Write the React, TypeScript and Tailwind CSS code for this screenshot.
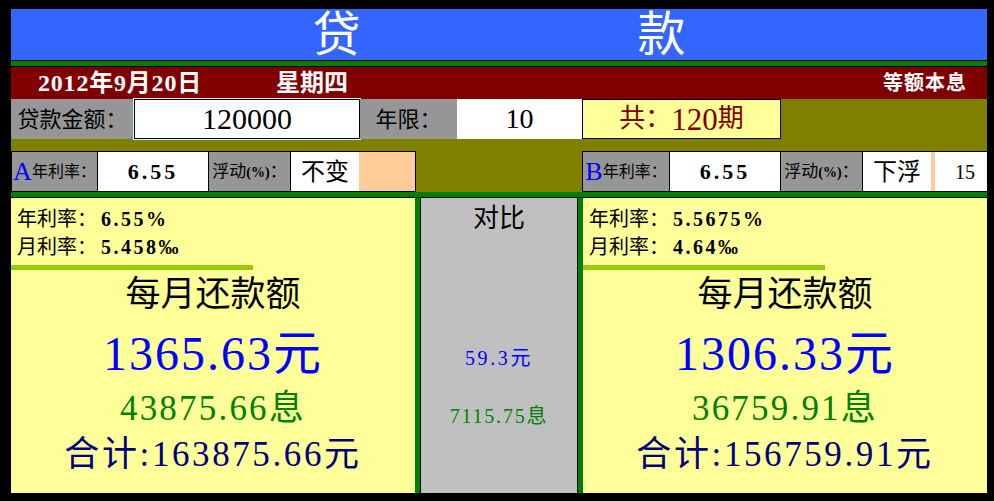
import React from "react";

const font = "font-['Liberation_Serif','Noto_Sans_CJK_SC',serif]";

function RateCell({ letter }: { letter: string }) {
  return (
    <div className="flex items-center justify-center whitespace-nowrap">
      <span className="text-[26px] leading-none text-[#0000ff]">{letter}</span>
      <span className="text-[16px] leading-none text-black">年利率：</span>
    </div>
  );
}

function FloatLabel() {
  return (
    <span className="text-[17px] leading-none text-black whitespace-nowrap">
      浮动<span className="font-bold text-[14px]">(%)</span>：
    </span>
  );
}

function Panel({
  yearRate,
  monthRate,
  pay,
  interest,
  total,
}: {
  yearRate: string;
  monthRate: string;
  pay: string;
  interest: string;
  total: string;
}) {
  return (
    <div className="w-[404px] h-full bg-[#ffff99] flex flex-col">
      <div className="pl-[6px] pt-[7px] text-[20px] leading-[28px] text-black">
        <div>
          年利率：<span className="ml-[4px] font-bold tracking-[2.5px]">{yearRate}%</span>
        </div>
        <div>
          月利率：<span className="ml-[4px] font-bold tracking-[2.5px]">{monthRate}‰</span>
        </div>
      </div>
      <div className="mt-[4px] h-[5px] w-[242px] bg-[#99cc00]" />
      <div className="mt-[5px] text-center text-[35px] leading-[40px] text-black">每月还款额</div>
      <div className="mt-[14px] text-center text-[48px] leading-[50px] tracking-[2px] text-[#0000ff]">
        {pay}元
      </div>
      <div className="mt-[10px] text-center text-[35px] leading-[40px] tracking-[2.2px] text-[#008000]">
        {interest}息
      </div>
      <div className="mt-[6px] text-center text-[35px] leading-[40px] tracking-[2.6px] text-[#000080]">
        合计:{total}元
      </div>
    </div>
  );
}

export default function App() {
  return (
    <div className={`w-[994px] h-[501px] bg-black pl-[11px] pt-[9px] ${font}`}>
      <div className="w-[976px] flex flex-col">
        {/* title */}
        <div className="h-[51px] bg-[#3366ff] flex items-center justify-center gap-[277px] text-white text-[48px] leading-none">
          <span>贷</span>
          <span>款</span>
        </div>
        <div className="h-px bg-black" />
        <div className="h-[5px] bg-[#008000]" />
        <div className="h-px bg-black" />

        {/* date row */}
        <div className="h-[32px] bg-[#800000] flex items-center text-white font-bold text-[24px] leading-none">
          <span className="ml-[27px] tracking-[0.8px]">2012年9月20日</span>
          <span className="ml-[74px]">星期四</span>
          <span className="ml-auto mr-[20px] text-[20px] tracking-[1px]">等额本息</span>
        </div>

        {/* inputs */}
        <div className="bg-[#808000] flex flex-col">
          <div className="h-[40px] flex">
            <div className="w-[123px] bg-[#969696] flex items-center justify-center text-[22px] text-black">
              贷款金额：
            </div>
            <div className="w-[226px] bg-white border border-black outline outline-1 outline-[#ccffff] flex items-center justify-center text-[30px] text-black leading-none">
              120000
            </div>
            <div className="w-[97px] bg-[#969696] flex items-center justify-center text-[22px] text-black">
              年限：
            </div>
            <div className="w-[125px] bg-white flex items-center justify-center text-[28px] text-black leading-none">
              10
            </div>
            <div className="w-[199px] bg-[#ffff99] border border-black flex items-center justify-center text-[26px] text-[#800000] leading-none">
              共：<span className="text-[31px]">120</span>期
            </div>
          </div>
          <div className="h-[12px]" />
          <div className="h-[41px] flex">
            <div className="w-[405px] flex border-y border-l border-black">
              <div className="w-[86px] bg-[#969696] border-r border-black flex items-center justify-center">
                <RateCell letter="A" />
              </div>
              <div className="w-[111px] bg-white border-r border-black flex items-center justify-center font-bold text-[22px] tracking-[3px] text-black">
                6.55
              </div>
              <div className="w-[82px] bg-[#969696] border-r border-black flex items-center justify-center">
                <FloatLabel />
              </div>
              <div className="w-[68px] bg-white flex items-center justify-center text-[24px] text-black">
                不变
              </div>
              <div className="w-[57px] bg-[#ffcc99] border-r border-black" />
            </div>
            <div className="w-[166px]" />
            <div className="w-[405px] flex border-y border-l border-black">
              <div className="w-[87px] bg-[#969696] border-r border-black flex items-center justify-center">
                <RateCell letter="B" />
              </div>
              <div className="w-[111px] bg-white border-r border-black flex items-center justify-center font-bold text-[22px] tracking-[3px] text-black">
                6.55
              </div>
              <div className="w-[82px] bg-[#969696] border-r border-black flex items-center justify-center">
                <FloatLabel />
              </div>
              <div className="w-[68px] bg-white flex items-center justify-center text-[24px] text-black">
                下浮
              </div>
              <div className="w-[4px] bg-[#ffcc99]" />
              <div className="flex-1 bg-white flex items-center justify-center pl-[8px] text-[20px] text-black">
                15
              </div>
            </div>
          </div>
        </div>
        <div className="h-[5px] bg-[#008000]" />
        <div className="h-px bg-black" />

        {/* result panels */}
        <div className="h-[295px] flex">
          <Panel yearRate="6.55" monthRate="5.458" pay="1365.63" interest="43875.66" total="163875.66" />
          <div className="w-[5px] bg-[#008000]" />
          <div className="w-px bg-black" />
          <div className="w-[156px] bg-[#c0c0c0] flex flex-col items-center">
            <div className="mt-[6px] text-[26px] leading-[30px] text-black">对比</div>
            <div className="mt-[112px] text-[20px] leading-[24px] tracking-[2.6px] text-[#0000ff]">59.3元</div>
            <div className="mt-[34px] text-[20px] leading-[24px] tracking-[1.8px] text-[#008000]">7115.75息</div>
          </div>
          <div className="w-px bg-black" />
          <div className="w-[5px] bg-[#008000]" />
          <Panel yearRate="5.5675" monthRate="4.64" pay="1306.33" interest="36759.91" total="156759.91" />
        </div>
      </div>
    </div>
  );
}
